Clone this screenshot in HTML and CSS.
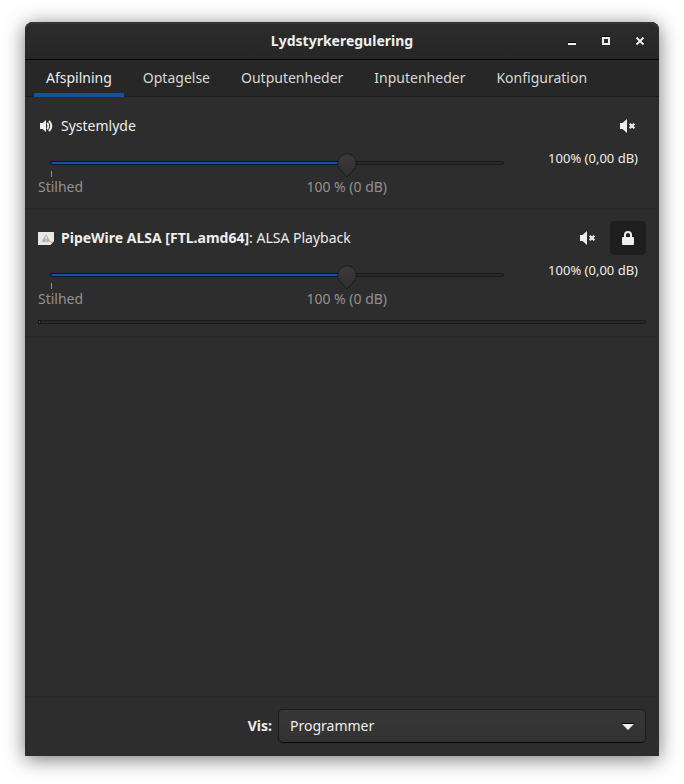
FILE: index.html
```html
<!DOCTYPE html>
<html lang="da">
<head>
    <meta charset="UTF-8">
    <meta name="viewport" content="width=device-width, initial-scale=1.0">
    <title>Lydstyrkeregulering</title>
    <link rel="stylesheet" href="styles.css">
</head>
<body>
<div class="window">

    <header class="titlebar">
        <h1>Lydstyrkeregulering</h1>
        <div class="window-buttons">
            <button type="button" aria-label="Minimer">
                <svg width="16" height="16" viewBox="0 0 16 16"><path d="M4 9h8v1H4z" fill="#000"/><path d="M4 10h8v2H4z" fill="#eeeeec"/></svg>
            </button>
            <button type="button" aria-label="Maksimer">
                <svg width="16" height="16" viewBox="0 0 16 16"><path d="M4 3h8v1H4z" fill="#000"/><path d="M5 5h6v6H5z" fill="none" stroke="#eeeeec" stroke-width="2"/></svg>
            </button>
            <button type="button" aria-label="Luk">
                <svg width="16" height="16" viewBox="0 0 16 16"><path d="M4.500 3.500l7 7M11.500 3.500l-7 7" stroke="#000" stroke-width="1.500"/><path d="M4.500 4.500l7 7M11.500 4.500l-7 7" stroke="#eeeeec" stroke-width="2"/></svg>
            </button>
        </div>
    </header>

    <nav class="tabs">
        <a href="#playback" class="active">Afspilning</a>
        <a href="#recording">Optagelse</a>
        <a href="#output">Outputenheder</a>
        <a href="#input">Inputenheder</a>
        <a href="#config">Konfiguration</a>
    </nav>

    <main id="playback">
        <section class="stream">
            <div class="stream-header">
                <svg width="16" height="16" viewBox="0 0 16 16" fill="#eeeeec">
                    <path d="M2 5h2.500L8 2v12L4.500 11H2z"/>
                    <path d="M9.300 4.800q2 3.200 0 6.400" fill="none" stroke="#eeeeec" stroke-width="1.700"/>
                    <path d="M11 2.800q4.600 5.200 0 10.400" fill="none" stroke="#eeeeec" stroke-width="2"/>
                </svg>
                <label for="system-volume">Systemlyde</label>
                <div class="stream-buttons">
                    <button type="button" aria-label="Slå lyden fra">
                        <svg width="16" height="16" viewBox="0 0 16 16"><path d="M0 5h2.500L7 1v14l-4.500-4H0z" fill="#eeeeec"/><path d="M9.700 5.700l4.600 4.600M14.300 5.700l-4.600 4.600" stroke="#eeeeec" stroke-width="2.200"/></svg>
                    </button>
                </div>
            </div>
            <div class="volume">
                <div class="scale">
                    <div class="slider">
                        <div class="track"><div class="fill" style="width: 65.36%"></div></div>
                        <input type="range" id="system-volume" min="0" max="153" value="100">
                    </div>
                    <div class="marks">
                        <span class="mark mark-silence">Stilhed</span>
                        <span class="mark mark-full">100 % (0 dB)</span>
                    </div>
                </div>
                <output class="level" for="system-volume">100% (0,00 dB)</output>
            </div>
        </section>

        <section class="stream">
            <div class="stream-header">
                <svg width="16" height="16" viewBox="0 0 16 16">
                    <path d="M0 2H16V11L12.500 15H0z" fill="#e8e8e6"/>
                    <path d="M16 11L12.500 15V11.500z" fill="#c8c8c5"/>
                    <path d="M8 4l4.500 8h-9z" fill="#b3b3b0"/>
                    <path d="M8 6.500v3M8 10.300v1" stroke="#f2f2f0"/>
                </svg>
                <label for="app-volume"><b>PipeWire ALSA [FTL.amd64]</b>: ALSA Playback</label>
                <div class="stream-buttons">
                    <button type="button" aria-label="Slå lyden fra">
                        <svg width="16" height="16" viewBox="0 0 16 16"><path d="M0 5h2.500L7 1v14l-4.500-4H0z" fill="#eeeeec"/><path d="M9.700 5.700l4.600 4.600M14.300 5.700l-4.600 4.600" stroke="#eeeeec" stroke-width="2.200"/></svg>
                    </button>
                    <button type="button" class="pressed" aria-pressed="true" aria-label="Lås kanaler sammen">
                        <svg width="16" height="16" viewBox="0 0 16 16"><path d="M5 8V5a3 3 0 0 1 6 0V8" fill="none" stroke="#eeeeec" stroke-width="2"/><rect x="2" y="7" width="12" height="8" rx="1" fill="#eeeeec"/></svg>
                    </button>
                </div>
            </div>
            <div class="volume">
                <div class="scale">
                    <div class="slider">
                        <div class="track"><div class="fill" style="width: 65.36%"></div></div>
                        <input type="range" id="app-volume" min="0" max="153" value="100">
                    </div>
                    <div class="marks">
                        <span class="mark mark-silence">Stilhed</span>
                        <span class="mark mark-full">100 % (0 dB)</span>
                    </div>
                </div>
                <output class="level" for="app-volume">100% (0,00 dB)</output>
            </div>
            <div class="peak"><div class="fill" style="width: 0%"></div></div>
        </section>
    </main>

    <footer class="filter">
        <label for="show">Vis:</label>
        <select id="show">
            <option>Programmer</option>
        </select>
    </footer>

</div>
</body>
</html>
```
FILE: styles.css
```css
* {
    box-sizing: border-box;
}

body {
    margin: 0;
    padding: 22px 25px 28px;
    min-height: 100vh;
    display: flex;
    background-color: #fff;
    color: #eeeeec;
    font-family: "Noto Sans", "Open Sans", sans-serif;
    font-size: 14px;
    line-height: 20px;
}

button {
    display: flex;
    align-items: center;
    justify-content: center;
    padding: 0;
    border: none;
    background: none;
}

.window {
    flex: 1;
    display: flex;
    flex-direction: column;
    min-width: 0;
    background-color: #2d2d2d;
    border-radius: 8px 8px 0 0;
    box-shadow: 0 3px 20px rgba(0, 0, 0, 0.55);
}

/* title bar */
.titlebar {
    display: grid;
    grid-template-columns: 1fr auto 1fr;
    align-items: center;
    height: 38px;
    padding: 0 7px;
    background: linear-gradient(#2c2c2c, #262626);
    border-bottom: 1px solid #070707;
    border-radius: 8px 8px 0 0;
    box-shadow: inset 0 2px #363636;
}

.titlebar h1 {
    grid-column: 2;
    margin: 0;
    font-size: 14px;
    font-weight: bold;
}

.window-buttons {
    display: flex;
    justify-content: flex-end;
    gap: 10px;
}

.window-buttons button {
    width: 24px;
    height: 24px;
}

/* tabs */
.tabs {
    display: flex;
    gap: 7px;
    height: 37px;
    padding: 0 9px;
    background-color: #272727;
    box-shadow: inset 0 -1px #1b1b1b;
}

.tabs a {
    padding: 8px 12px;
    color: #d8d8d6;
    text-decoration: none;
    white-space: nowrap;
}

.tabs a.active {
    color: #eeeeec;
    box-shadow: inset 0 -4px #15539e;
}

/* streams */
main {
    flex: 1;
}

.stream {
    padding: 12px 13px;
    border-bottom: 1px solid #292929;
}

.stream-header {
    display: flex;
    align-items: center;
    gap: 7px;
    height: 34px;
}

.stream-buttons {
    display: flex;
    gap: 4px;
    margin-left: auto;
}

.stream-buttons button {
    width: 36px;
    height: 34px;
    border-radius: 5px;
}

.stream-buttons .pressed {
    background-color: #1e1e1e;
}

.volume {
    display: flex;
    height: 53px;
}

.scale {
    flex: 1;
}

.slider {
    display: grid;
    grid-template-rows: 20px;
    align-items: center;
    height: 28px;
    padding-top: 10px;
}

.slider .track,
.slider input {
    grid-area: 1 / 1;
}

.track,
.peak {
    height: 4px;
    background-color: #292929;
    border-radius: 2px;
    box-shadow: inset 0 0 0 1px #1b1b1b;
}

.track {
    margin: 0 12px;
}

.fill {
    min-width: 3px;
    height: 4px;
    background-color: #15539e;
    border: 1px solid #03132a;
    border-radius: 2px;
}

.slider input {
    appearance: none;
    width: auto;
    height: 20px;
    margin: 0 2px;
    background: none;
    z-index: 1;
}

.slider input::-webkit-slider-runnable-track {
    height: 20px;
}

/* drop-shaped handle pointing at the marks */
.slider input::-webkit-slider-thumb {
    appearance: none;
    width: 20px;
    height: 26px;
    background: url("data:image/svg+xml,%3Csvg xmlns='http://www.w3.org/2000/svg' width='20' height='26'%3E%3Cdefs%3E%3ClinearGradient id='g' x2='0' y2='1'%3E%3Cstop stop-color='%23393939'/%3E%3Cstop offset='1' stop-color='%23303030'/%3E%3C/linearGradient%3E%3C/defs%3E%3Cpath d='M10 24L3.300 16.500A9.300 9.300 0 1 1 16.700 16.500Z' fill='url(%23g)' stroke='%231b1b1b' stroke-linejoin='round'/%3E%3C/svg%3E") no-repeat;
}

.marks {
    display: grid;
    grid-template-columns: 100fr 53fr;
    padding: 0 12px;
    color: #919190;
}

.mark {
    grid-area: 1 / 1;
    display: flex;
    flex-direction: column;
    width: 0;
    white-space: nowrap;
}

.mark::before {
    content: "";
    width: 1px;
    height: 6px;
    background-color: #919190;
}

.mark-silence {
    text-indent: -12px;
}

.mark-silence::before {
    margin-left: 1px;
}

.mark-full {
    justify-self: end;
    align-items: center;
}

.level {
    width: 130px;
    padding: 5px 8px;
    font-size: 13px;
    text-align: right;
}

.peak {
    margin-top: 12px;
}

/* bottom bar */
.filter {
    display: flex;
    align-items: center;
    justify-content: flex-end;
    gap: 6px;
    padding: 12px 13px 13px;
    border-top: 1px solid #292929;
}

.filter label {
    font-weight: bold;
}

.filter select {
    appearance: none;
    width: 61%;
    max-width: 368px;
    height: 34px;
    padding: 0 40px 0 11px;
    color: #eeeeec;
    font: inherit;
    background: url("data:image/svg+xml,%3Csvg xmlns='http://www.w3.org/2000/svg' width='12' height='7'%3E%3Cpath d='M0 0h12v1H0z'/%3E%3Cpath d='M0 1h12L6 7z' fill='%23eeeeec'/%3E%3C/svg%3E") no-repeat right 11px center, linear-gradient(#373737, #323232);
    border: 1px solid #1b1b1b;
    border-bottom-color: #070707;
    border-radius: 5px;
}
```
